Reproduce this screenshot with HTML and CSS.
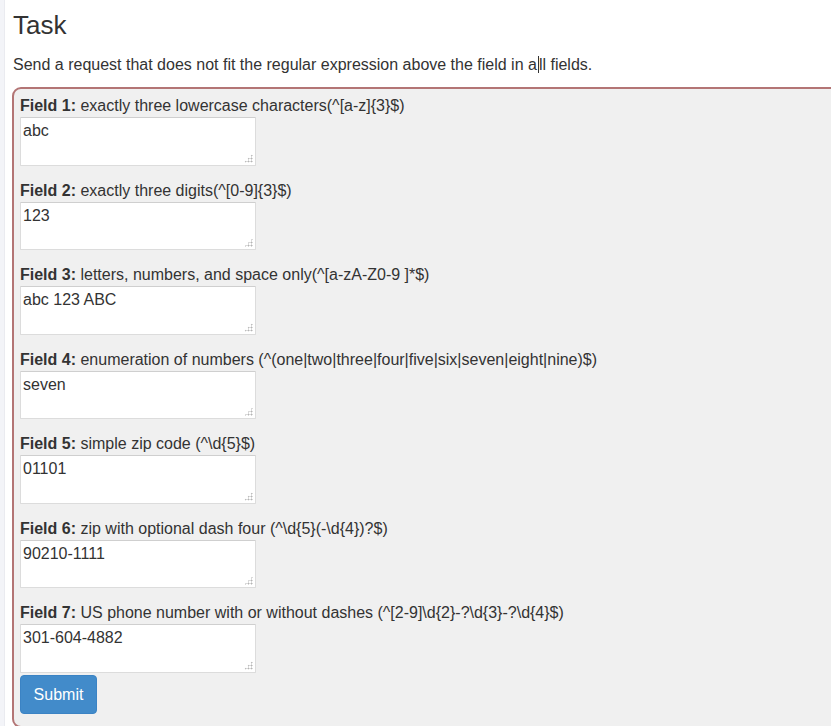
FILE: index.html
```html
<!DOCTYPE html>
<html>
<head>
<meta charset="utf-8">
<link rel="stylesheet" href="styles.css">
</head>
<body>
<div class="strip"></div>
<main class="page">
  <h3 class="title">Task</h3>
  <p class="desc">Send a request that does not fit the regular expression above the field in a<span class="caret">l</span>l fields.</p>
  <form class="box">
    <div class="field">
      <label><b>Field 1:</b> exactly three lowercase characters(^[a-z]{3}$)</label>
      <div class="ta"><textarea>abc</textarea></div>
    </div>
    <div class="field">
      <label><b>Field 2:</b> exactly three digits(^[0-9]{3}$)</label>
      <div class="ta"><textarea>123</textarea></div>
    </div>
    <div class="field">
      <label><b>Field 3:</b> letters, numbers, and space only(^[a-zA-Z0-9 ]*$)</label>
      <div class="ta"><textarea>abc 123 ABC</textarea></div>
    </div>
    <div class="field">
      <label><b>Field 4:</b> enumeration of numbers (^(one|two|three|four|five|six|seven|eight|nine)$)</label>
      <div class="ta"><textarea>seven</textarea></div>
    </div>
    <div class="field">
      <label><b>Field 5:</b> simple zip code (^\d{5}$)</label>
      <div class="ta"><textarea>01101</textarea></div>
    </div>
    <div class="field">
      <label><b>Field 6:</b> zip with optional dash four (^\d{5}(-\d{4})?$)</label>
      <div class="ta"><textarea>90210-1111</textarea></div>
    </div>
    <div class="field last">
      <label><b>Field 7:</b> US phone number with or without dashes (^[2-9]\d{2}-?\d{3}-?\d{4}$)</label>
      <div class="ta"><textarea>301-604-4882</textarea></div>
    </div>
    <button type="button" class="submit">Submit</button>
  </form>
</main>
</body>
</html>
```

FILE: styles.css
```css
html, body {
  margin: 0;
  padding: 0;
  overflow: hidden;
  height: 100%;
  background: #fff;
}
body {
  display: flex;
  font-family: "Liberation Sans", Arial, sans-serif;
  font-size: 16px;
  line-height: 20px;
  color: #333;
}
.strip {
  width: 4px;
  flex: none;
  background: #f3f4f8;
  border-right: 1px solid #eaebf0;
}
.page {
  flex: none;
  padding-left: 7px;
  width: 950px;
}
.title {
  font-size: 26px;
  font-weight: 400;
  line-height: 29px;
  margin: 11px 0 0 1px;
  color: #333;
}
.desc {
  margin: 15px 0 0 1px;
  line-height: 20px;
}
.caret {
  border-left: 1px solid #333;
  margin-left: 1px;
}
.box {
  margin-top: 12px;
  border: 2px solid #b37575;
  border-radius: 9px;
  background: #f0f0f0;
  padding: 8px 0 12px 6px;
  display: flex;
  flex-direction: column;
  align-items: flex-start;
}
.field {
  display: flex;
  flex-direction: column;
  align-items: flex-start;
  margin-bottom: 16px;
}
.field.last {
  margin-bottom: 2.6px;
}
.field label {
  display: block;
  line-height: 18px;
  margin-bottom: 2px;
}
.field label b {
  font-weight: 700;
}
.ta {
  position: relative;
}
.ta::after {
  content: "";
  position: absolute;
  right: 3px;
  bottom: 3px;
  width: 9px;
  height: 9px;
  background: radial-gradient(circle, #b4b4b4 0.9px, transparent 1.1px) 0 0 / 3px 3px;
  clip-path: polygon(100% 0, 100% 100%, 0 100%);
  pointer-events: none;
}
textarea {
  display: block;
  width: 236px;
  height: 48.5px;
  box-sizing: border-box;
  border: 1px solid #dcdcdc;
  border-top-color: #cfcfcf;
  border-radius: 1px;
  background: #fff;
  font-family: "Liberation Sans", Arial, sans-serif;
  font-size: 16px;
  line-height: 20px;
  color: #333;
  padding: 3px 2px;
  margin: 0;
  resize: none;
}
.submit {
  font-family: "Liberation Sans", Arial, sans-serif;
  font-size: 16px;
  line-height: 20px;
  color: #fff;
  background: #428bca;
  border: 1px solid #3b83c4;
  border-radius: 4px;
  padding: 8.5px 0;
  width: 77px;
  text-align: center;
}
```
